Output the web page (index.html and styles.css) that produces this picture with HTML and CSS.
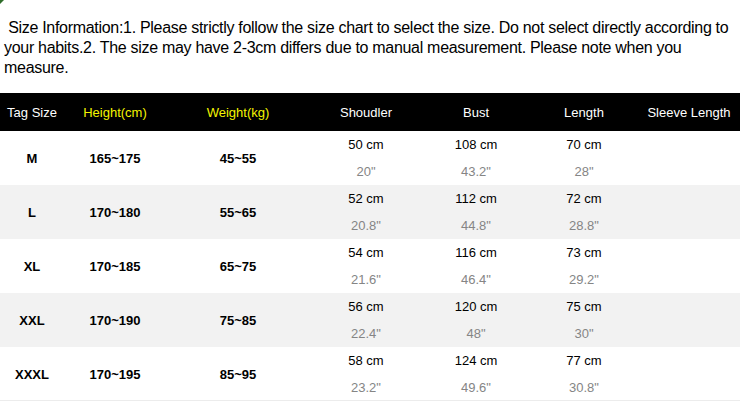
FILE: index.html
```html
<!DOCTYPE html>
<html>
<head>
<meta charset="utf-8">
<link rel="stylesheet" href="styles.css">
</head>
<body>
<div class="page">
  <span class="corner"></span>
  <p class="intro">&nbsp;Size Information:1. Please strictly follow the size chart to select the size. Do not select directly according to your habits.2. The size may have 2-3cm differs due to manual measurement. Please note when you measure.</p>
  <div class="chart">
    <div class="row head">
      <div class="cell">Tag Size</div>
      <div class="cell yellow">Height(cm)</div>
      <div class="cell yellow">Weight(kg)</div>
      <div class="cell">Shoudler</div>
      <div class="cell">Bust</div>
      <div class="cell">Length</div>
      <div class="cell">Sleeve Length</div>
    </div>
    <div class="row">
      <div class="cell bold">M</div>
      <div class="cell bold">165~175</div>
      <div class="cell bold">45~55</div>
      <div class="cell m"><span>50 cm</span><span class="in">20"</span></div>
      <div class="cell m"><span>108 cm</span><span class="in">43.2"</span></div>
      <div class="cell m"><span>70 cm</span><span class="in">28"</span></div>
      <div class="cell"></div>
    </div>
    <div class="row alt">
      <div class="cell bold">L</div>
      <div class="cell bold">170~180</div>
      <div class="cell bold">55~65</div>
      <div class="cell m"><span>52 cm</span><span class="in">20.8"</span></div>
      <div class="cell m"><span>112 cm</span><span class="in">44.8"</span></div>
      <div class="cell m"><span>72 cm</span><span class="in">28.8"</span></div>
      <div class="cell"></div>
    </div>
    <div class="row">
      <div class="cell bold">XL</div>
      <div class="cell bold">170~185</div>
      <div class="cell bold">65~75</div>
      <div class="cell m"><span>54 cm</span><span class="in">21.6"</span></div>
      <div class="cell m"><span>116 cm</span><span class="in">46.4"</span></div>
      <div class="cell m"><span>73 cm</span><span class="in">29.2"</span></div>
      <div class="cell"></div>
    </div>
    <div class="row alt">
      <div class="cell bold">XXL</div>
      <div class="cell bold">170~190</div>
      <div class="cell bold">75~85</div>
      <div class="cell m"><span>56 cm</span><span class="in">22.4"</span></div>
      <div class="cell m"><span>120 cm</span><span class="in">48"</span></div>
      <div class="cell m"><span>75 cm</span><span class="in">30"</span></div>
      <div class="cell"></div>
    </div>
    <div class="row last">
      <div class="cell bold">XXXL</div>
      <div class="cell bold">170~195</div>
      <div class="cell bold">85~95</div>
      <div class="cell m"><span>58 cm</span><span class="in">23.2"</span></div>
      <div class="cell m"><span>124 cm</span><span class="in">49.6"</span></div>
      <div class="cell m"><span>77 cm</span><span class="in">30.8"</span></div>
      <div class="cell"></div>
    </div>
  </div>
</div>
</body>
</html>
```

FILE: styles.css
```css
html, body {
  margin: 0;
  padding: 0;
  background: #fff;
}
body {
  font-family: "Liberation Sans", Arial, sans-serif;
  color: #000;
}
.page {
  position: relative;
  width: 741px;
  height: 403px;
  overflow: hidden;
}
.corner {
  position: absolute;
  left: 0;
  top: 0;
  width: 0;
  height: 0;
  border-top: 4px solid #2f6d2a;
  border-right: 4px solid transparent;
}
.intro {
  margin: 0;
  padding: 18px 6px 0 4px;
  font-size: 16px;
  line-height: 20px;
  letter-spacing: -0.3px;
  word-spacing: 0;
}
.chart {
  margin-top: 15px;
  width: 740px;
  border-bottom: 1px solid #ececec;
}
.row {
  display: grid;
  grid-template-columns: 64px 102px 144px 112px 108px 108px 102px;
  height: 54px;
}
.row.head {
  height: 38px;
  background: #000;
  color: #fff;
}
.row.alt {
  background: #f2f2f2;
}
.row.last {
  height: 53px;
}
.cell {
  display: flex;
  flex-direction: column;
  align-items: center;
  justify-content: center;
  font-size: 13px;
  white-space: nowrap;
}
.yellow {
  color: #f5f500;
}
.bold {
  font-weight: bold;
}
.m span {
  line-height: 27px;
}
.m .in {
  color: #858585;
}
```
